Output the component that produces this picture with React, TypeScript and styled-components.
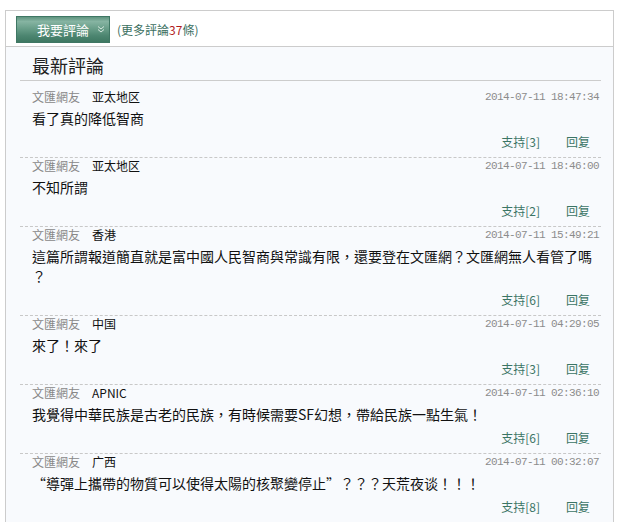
import styled, { createGlobalStyle } from 'styled-components';

const GlobalStyle = createGlobalStyle`
    html, body {
        margin: 0;
        padding: 0;
        background: #ffffff;
    }
    body {
        font-family: "Noto Sans CJK TC", "Noto Sans CJK SC", sans-serif;
    }
`;

interface IComment {
    id: number;
    area: string;
    time: string;
    text: string;
    support: number;
}

const comments: IComment[] = [
    { id: 1, area: '亚太地区', time: '2014-07-11 18:47:34', text: '看了真的降低智商', support: 3 },
    { id: 2, area: '亚太地区', time: '2014-07-11 18:46:00', text: '不知所謂', support: 2 },
    {
        id: 3,
        area: '香港',
        time: '2014-07-11 15:49:21',
        text: '這篇所謂報道簡直就是富中國人民智商與常識有限，還要登在文匯網？文匯網無人看管了嗎？',
        support: 6,
    },
    { id: 4, area: '中国', time: '2014-07-11 04:29:05', text: '來了！來了', support: 3 },
    {
        id: 5,
        area: 'APNIC',
        time: '2014-07-11 02:36:10',
        text: '我覺得中華民族是古老的民族，有時候需要SF幻想，帶給民族一點生氣！',
        support: 6,
    },
    {
        id: 6,
        area: '广西',
        time: '2014-07-11 00:32:07',
        text: '“導彈上攜帶的物質可以使得太陽的核聚變停止”？？？天荒夜谈！！！',
        support: 8,
    },
];

const Box = styled.div`
    box-sizing: border-box;
    width: 609px;
    margin: 10px 0 0 5px;
    border: 1px solid #cccccc;
    border-bottom: none;
    background: #f8fafd;
`;

const Toolbar = styled.div`
    display: flex;
    align-items: center;
    gap: 7px;
    height: 35px;
    padding: 0 10px;
    background: #ffffff;
    border-bottom: 1px solid #cccccc;
`;

const PostButton = styled.button`
    box-sizing: border-box;
    display: flex;
    align-items: center;
    gap: 8px;
    width: 94px;
    height: 27px;
    margin-top: 1px;
    padding: 0 0 0 20px;
    border: 1px solid #3f7764;
    background: linear-gradient(#5f947f 0%, #86b4a2 18%, #6a9f8a 45%, #4c8570 75%, #3e7862 100%);
    color: #ffffff;
    font-family: "Noto Sans CJK TC", "Noto Sans CJK SC", sans-serif;
    font-size: 13px;
    cursor: pointer;
`;

const MoreLink = styled.span`
    color: #3b6f5f;
    font-size: 12px;
    margin-top: 1px;
`;

const Count = styled.span`
    color: #b01b1b;
`;

const Panel = styled.div`
    padding: 0 12px 0 14px;
`;

const Title = styled.h2`
    margin: 0;
    padding: 3px 0 0 12px;
    height: 30px;
    line-height: 30px;
    font-size: 18px;
    font-weight: normal;
    color: #222222;
    border-bottom: 1px solid #cccccc;
`;

const List = styled.ul`
    list-style: none;
    margin: 0;
    padding: 8px 0 0;
`;

const Row = styled.li`
    padding: 0 2px 5px 12px;
    border-bottom: 1px dashed #c8c8c8;
`;

const Meta = styled.div`
    display: flex;
    align-items: center;
    height: 16px;
    line-height: 16px;
    font-size: 12px;
`;

const User = styled.span`
    color: #888888;
    margin-right: 12px;
`;

const Area = styled.span`
    color: #111111;
`;

const Time = styled.span`
    margin-left: auto;
    color: #8c8c8c;
    font-family: "Liberation Mono", monospace;
    font-size: 11px;
    letter-spacing: -0.6px;
`;

const Content = styled.p`
    margin: 3px 0 0;
    line-height: 20px;
    font-size: 14px;
    color: #111111;
    line-break: anywhere;
`;

const Actions = styled.div`
    display: flex;
    justify-content: flex-end;
    gap: 26px;
    margin-top: 4px;
    padding-right: 9px;
    line-height: 20px;
    font-size: 12px;
    color: #3b7565;
`;

const Action = styled.span`
    cursor: pointer;
`;

function Chevron() {
    return (
        <svg width="8" height="8" viewBox="0 0 8 8" fill="none" stroke="#d6e8e0" strokeWidth="1">
            <path d="M1 1.5 L4 4 L7 1.5" />
            <path d="M1 4.5 L4 7 L7 4.5" />
        </svg>
    );
}

function App() {
    return (
        <>
            <GlobalStyle />
            <Box>
                <Toolbar>
                    <PostButton>
                        我要評論 <Chevron />
                    </PostButton>
                    <MoreLink>
                        (更多評論<Count>37</Count>條)
                    </MoreLink>
                </Toolbar>
                <Panel>
                    <Title>最新評論</Title>
                    <List>
                        {comments.map((c) => (
                            <Row key={c.id}>
                                <Meta>
                                    <User>文匯網友</User>
                                    <Area>{c.area}</Area>
                                    <Time>{c.time}</Time>
                                </Meta>
                                <Content>{c.text}</Content>
                                <Actions>
                                    <Action>支持[{c.support}]</Action>
                                    <Action>回复</Action>
                                </Actions>
                            </Row>
                        ))}
                    </List>
                </Panel>
            </Box>
        </>
    );
}

export default App;
